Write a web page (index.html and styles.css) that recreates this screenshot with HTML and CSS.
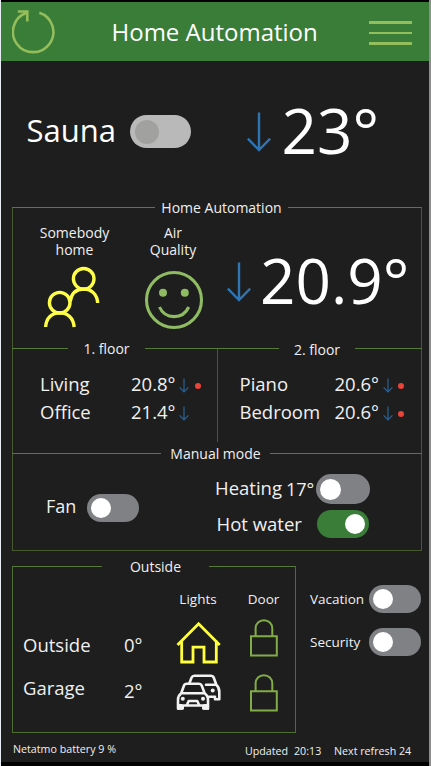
FILE: index.html
```html
<!DOCTYPE html>
<html lang="en">
<head>
<meta charset="utf-8">
<title>Home Automation</title>
<link rel="stylesheet" href="styles.css">
</head>
<body>
<svg class="defs" width="0" height="0">
  <symbol id="arrow" viewBox="0 0 24 40"><path d="M12 .5V38M.8 26.6 12 38 23.2 26.6" fill="none" stroke="#2e75b6" stroke-width="2.4"/></symbol>
  <symbol id="arrow-small" viewBox="0 0 10 15"><path d="M5 .5V14M.6 9.4 5 14 9.4 9.4" fill="none" stroke="#2a6396" stroke-width="1.2"/></symbol>
  <symbol id="lock" viewBox="0 0 28 38"><path d="M1 17.3H26.8V36.5H1ZM5.6 17V9.6C5.6 4.6 9.2 1.3 13.9 1.3S22.3 4.6 22.3 9.6V17" fill="none" stroke="#82ac48" stroke-width="2"/></symbol>
</svg>
<div class="screen">
  <header class="bar">
    <svg class="refresh" width="44" height="46" viewBox="0 0 44 46"><path d="M27.3 3.7A20.2 20.2 0 1 1 14.7 3.8M5.8 2.5H15.3V12.5" fill="none" stroke="#94bd5c" stroke-width="2.6"/></svg>
    <h1 class="title">Home Automation</h1>
    <div class="menu"><i></i><i></i><i></i></div>
  </header>

  <section class="sauna">
    <span class="sauna-name">Sauna</span>
    <span class="toggle disabled"><i></i></span>
    <svg class="arrow" width="24" height="40"><use href="#arrow"/></svg>
    <span class="big">23°</span>
  </section>

  <section class="panel house">
    <div class="legend l-home"><i></i><span>Home Automation</span><i></i></div>
    <div class="status">
      <div class="tile people">
        <span>Somebody<br>home</span>
        <svg width="58" height="62" viewBox="0 0 58 62"><g fill="none" stroke="#ffff4a" stroke-width="3.4"><circle cx="40.7" cy="12.8" r="10.3"/><circle cx="16.7" cy="36.7" r="10.3"/><path d="M2.6 61C3.2 52 9 46.9 16.8 46.9S30.3 52 31.2 61M27.2 35.5C28.5 27.4 33.3 23 40.6 23 48.8 23 54.2 28.7 54.7 37"/></g></svg>
      </div>
      <div class="tile air">
        <span>Air<br>Quality</span>
        <svg width="60" height="60" viewBox="0 0 60 60"><g fill="none" stroke="#8fbc62" stroke-width="3.1"><circle cx="30" cy="30" r="27.5"/><path d="M15.5 37C21 49.8 39 49.8 44.7 37"/></g><g fill="#8fbc62"><circle cx="19" cy="22.8" r="4"/><circle cx="40.8" cy="22.8" r="4"/></g></svg>
      </div>
      <svg class="arrow" width="24" height="40"><use href="#arrow"/></svg>
      <span class="big">20.9°</span>
    </div>
    <div class="legend l-floors"><i></i><span>1. floor</span><i></i><span class="lower">2. floor</span><i></i></div>
    <div class="floors">
      <div class="floor first">
        <span>Living</span><span class="val">20.8°</span><svg width="10" height="15"><use href="#arrow-small"/></svg><i class="dot"></i>
        <span>Office</span><span class="val">21.4°</span><svg width="10" height="15"><use href="#arrow-small"/></svg>
      </div>
      <div class="floor second">
        <span>Piano</span><span class="val">20.6°</span><svg width="10" height="15"><use href="#arrow-small"/></svg><i class="dot"></i>
        <span>Bedroom</span><span class="val">20.6°</span><svg width="10" height="15"><use href="#arrow-small"/></svg><i class="dot"></i>
      </div>
    </div>
    <div class="legend l-manual"><i></i><span>Manual mode</span><i></i></div>
    <div class="manual">
      <div class="fan"><span>Fan</span><span class="toggle"><i></i></span></div>
      <div class="heat">
        <div class="heating"><span class="name">Heating</span><span class="deg">17°</span><span class="toggle large"><i></i></span></div>
        <div class="water"><span class="name">Hot water</span><span class="toggle on"><i></i></span></div>
      </div>
    </div>
  </section>

  <div class="bottom">
    <section class="panel outside">
      <div class="legend l-outside"><i></i><span>Outside</span><i></i></div>
      <div class="heads"><span></span><span></span><span>Lights</span><span>Door</span></div>
      <div class="place p-out">
        <span>Outside</span><span class="temp">0°</span>
        <svg class="light" width="46" height="42" viewBox="0 0 46 42"><path d="M1.5 23 22.6 1.8 43.7 23M5.7 18.5V40H17V25.2H28V40H40.3V18.5" fill="none" stroke="#ffff40" stroke-width="2.8"/></svg>
        <svg class="lock" width="28" height="38"><use href="#lock"/></svg>
      </div>
      <div class="place p-gar">
        <span>Garage</span><span class="temp">2°</span>
        <svg class="light" width="46" height="38" viewBox="0 0 46 38"><g fill="none" stroke="#f2f2f2" stroke-width="2.6" stroke-linejoin="round" stroke-linecap="round"><path d="M13.3 9.5 15.6 3.5Q16.4 1.7 18.4 1.7H34.8Q37 1.7 37.8 3.7L40.3 10.8Q43.3 13.5 43.3 18V25.3H39V22.7H33M30 10.8H40"/><path d="M5.2 19.3 8 11.5Q8.6 9.7 10.7 9.7H23Q25 9.7 25.7 11.5L28.6 19.3M5.2 19.3H28.6Q32 21.4 32 26V34.5H27.3V31.5H6.7V34.5H2V26Q2 21.4 5.2 19.3ZM11 30.7 12.7 27H21.3L23 30.7"/></g><g fill="#f2f2f2"><circle cx="6.8" cy="24.7" r="2"/><circle cx="27" cy="24.7" r="2"/><circle cx="36.7" cy="16.5" r="2"/><path d="M1 30H6.5V35.7H1ZM27.5 30H33V35.7H27.5Z"/></g></svg>
        <svg class="lock" width="28" height="38"><use href="#lock"/></svg>
      </div>
    </section>
    <aside class="modes">
      <div><span>Vacation</span><span class="toggle"><i></i></span></div>
      <div><span>Security</span><span class="toggle"><i></i></span></div>
    </aside>
  </div>

  <footer class="foot"><span class="battery">Netatmo battery 9 %</span><span class="upd">Updated</span><span class="time">20:13</span><span class="next">Next refresh 24</span></footer>
</div>
</body>
</html>
```
FILE: styles.css
```css
* { box-sizing: border-box; }
body { margin: 0; width: 431px; height: 766px; overflow: hidden; background: linear-gradient(90deg, #e8eef4 1px, #8e8e8e 1px); font-family: "Open Sans", "Noto Sans", sans-serif; color: #f0f0f0; }
.defs { position: absolute; }
svg { display: block; flex: none; }
span { white-space: nowrap; }
.screen { margin-left: 1px; width: 428px; height: 766px; background: #1e1e1e; border-top: 2px solid #000; border-bottom: 4px solid #000; }

.bar { height: 59px; background: #3a7d38; display: flex; align-items: flex-start; }
.refresh { margin: 6.5px 0 0 11px; }
.title { margin: 13px 0 0 55.5px; width: 207px; font-size: 24px; line-height: 34px; font-weight: 400; white-space: nowrap; color: #fff; }
.menu { margin: 19px 0 0 50px; width: 43px; height: 24px; display: flex; flex-direction: column; justify-content: space-between; }
.menu i { height: 2.7px; background: #94bd5c; }

.sauna { height: 146px; display: flex; align-items: flex-start; }
.sauna-name { margin: 49px 0 0 25.5px; width: 103px; font-size: 31px; line-height: 40px; color: #fff; }
.sauna .arrow { margin: 51px 0 0 56.5px; }
.big { font-size: 62px; line-height: 62px; color: #fff; }
.sauna .big { margin: 38px 0 0 10.5px; }

.toggle { flex: none; display: flex; align-items: center; width: 52px; height: 28px; border-radius: 14px; background: #808184; padding: 0 4px; }
.toggle i { width: 20px; height: 20px; border-radius: 50%; background: #fff; }
.toggle.on { background: #3a7d38; justify-content: flex-end; }
.toggle.large { width: 54px; height: 30px; border-radius: 15px; }
.toggle.large i { width: 21px; height: 21px; }
.toggle.disabled { margin: 54px 0 0; width: 61px; height: 33px; border-radius: 17px; background: #b9b9b9; padding: 0 5px; }
.toggle.disabled i { width: 24px; height: 24px; background: #a1a19f; }

.panel { border: 1px solid #465b2d; border-top: 0; margin-left: 11px; }
.house { width: 410px; height: 344px; }
.legend { display: grid; grid-template-rows: 1px; height: 1px; font-size: 14px; line-height: 18px; margin: 0 -1px; }
.legend i { height: 1px; background: #587a38; }
.legend span { height: 18px; margin-top: -8px; text-align: center; }
.l-home { grid-template-columns: 143px 133px 134px; }
.l-floors { grid-template-columns: 56px 77px 134px 76px 67px; }
.l-floors .lower { margin-top: -7px; }
.l-manual { grid-template-columns: 149px 109px 152px; }
.l-outside { grid-template-columns: 90px 107px 86px; }

.status { height: 140px; display: flex; align-items: flex-start; }
.tile { font-size: 14px; line-height: 17px; text-align: center; display: flex; flex-direction: column; align-items: center; padding-top: 16px; }
.people { margin-left: 21.5px; width: 80px; }
.people svg { margin: 8px 6px 0 0; }
.air { margin-left: 18.5px; width: 80px; }
.air svg { margin: 12px 0 0 1px; }
.status .arrow { margin: 54px 0 0 14px; }
.status .big { margin: 41px 0 0 9px; }

.floors { height: 104px; display: flex; align-items: flex-start; }
.floor { display: grid; grid-auto-rows: 28px; align-items: center; font-size: 18.5px; line-height: 28px; padding-top: 21px; }
.first { grid-template-columns: 91px 47.5px 16.5px 7px; width: 205px; height: 93px; padding-left: 27px; border-right: 1px solid #465b2d; }
.second { grid-template-columns: 95px 48px 15px 7px; padding-left: 21.5px; }
.floor svg { margin-top: 3px; }
.dot { width: 6px; height: 6px; border-radius: 50%; background: #e8443a; margin-top: 3px; }

.manual { height: 96px; display: flex; font-size: 18px; }
.fan { width: 197px; display: flex; align-items: flex-start; padding: 40px 0 0 33px; }
.fan span:first-child { width: 41px; line-height: 24px; }
.heat { padding-top: 20px; }
.heating, .water { display: flex; align-items: center; line-height: 24px; }
.heating { height: 30px; padding-left: 5px; }
.heating .name { width: 71px; margin-top: -3px; font-size: 18.5px; }
.heating .deg { width: 30px; }
.water { height: 28px; margin-top: 6px; padding-left: 6.5px; font-size: 18.5px; }
.water .name { width: 100.5px; }

.bottom { display: flex; margin-top: 15px; height: 167px; }
.outside { width: 284px; height: 167px; border-color: #4d6d31; }
.heads { display: grid; grid-template-columns: 80px 65px 80px 51px; font-size: 13.5px; line-height: 18px; text-align: center; padding-top: 23px; }
.place { display: grid; grid-template-columns: 101px 52px 72px 30px; align-items: center; font-size: 18.5px; line-height: 26px; padding-left: 10px; }
.p-out { height: 42px; margin-top: 14px; }
.p-out span { margin-top: 3px; }
.p-out .lock { margin: -10px 0 0 1.5px; }
.p-gar { height: 38px; margin-top: 10px; }
.p-gar span { margin-top: -10px; }
.p-gar .temp { margin-top: -4px; }
.p-gar .light { margin: -1px 0 0 -.5px; }
.p-gar .lock { margin: -1px 0 0 1.5px; }
.modes { padding: 19px 0 0 14px; font-size: 13.5px; }
.modes div { display: flex; align-items: center; height: 28px; margin-bottom: 15px; line-height: 20px; }
.modes div span:first-child { width: 59px; }

.foot { display: flex; align-items: flex-start; font-size: 10.7px; line-height: 16px; padding: 8px 0 0 12px; }
.battery { width: 232px; }
.upd { width: 49px; margin-top: 2px; }
.time { width: 40px; margin-top: 2px; }
.next { margin-top: 2px; }
```
